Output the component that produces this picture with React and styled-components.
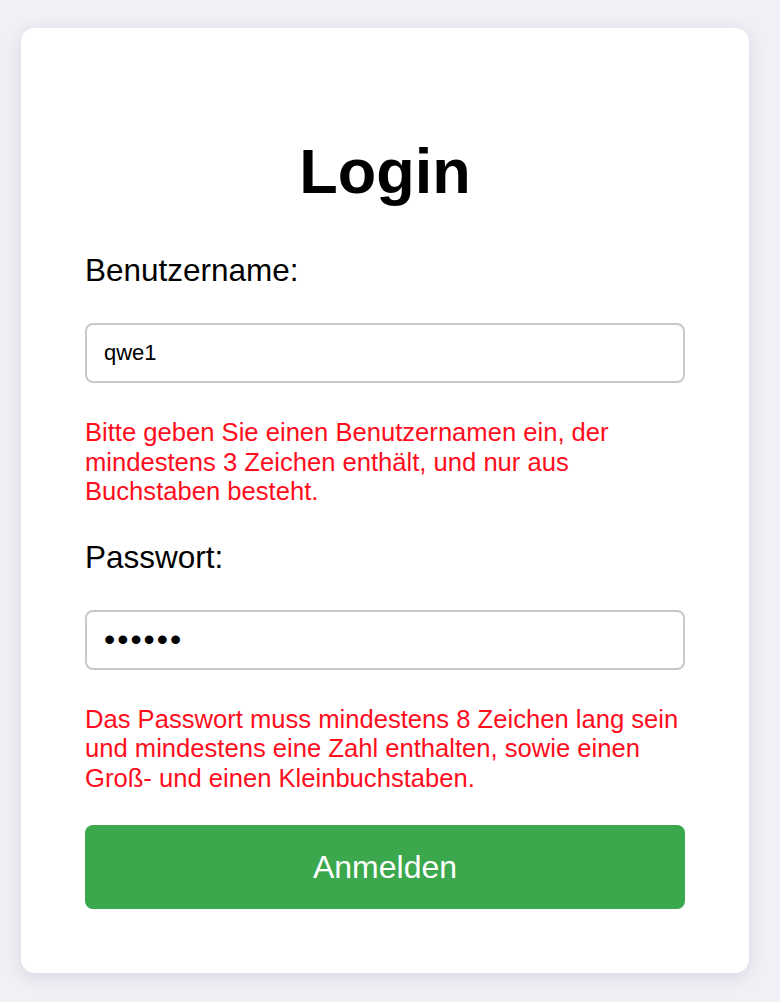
import React, { useState } from "react";
import styled, { createGlobalStyle } from "styled-components";

const GlobalStyle = createGlobalStyle`
  html, body {
    margin: 0;
    padding: 0;
    background: #f0f0f6;
    font-family: "Liberation Sans", Arial, Helvetica, sans-serif;
  }
  * {
    box-sizing: border-box;
  }
`;

export default function App() {
  const [usuario, setUsuario] = useState("qwe1");
  const [clave, setClave] = useState("123456");

  return (
    <>
      <GlobalStyle />
      <Pagina>
        <Tarjeta>
          <Titulo>Login</Titulo>
          <form onSubmit={(e) => e.preventDefault()}>
            <Grupo>
              <Etiqueta htmlFor="usuario">Benutzername:</Etiqueta>
              <Campo
                id="usuario"
                type="text"
                value={usuario}
                onChange={(e) => setUsuario(e.target.value)}
              />
              <Error>
                Bitte geben Sie einen Benutzernamen ein, der mindestens 3
                Zeichen enthält, und nur aus Buchstaben besteht.
              </Error>
            </Grupo>
            <Grupo>
              <Etiqueta htmlFor="clave">Passwort:</Etiqueta>
              <Campo
                id="clave"
                type="password"
                $oculto
                value={clave}
                onChange={(e) => setClave(e.target.value)}
              />
              <Error>
                Das Passwort muss mindestens 8 Zeichen lang sein und
                mindestens eine Zahl enthalten, sowie einen Groß- und einen
                Kleinbuchstaben.
              </Error>
            </Grupo>
            <Boton type="submit">Anmelden</Boton>
          </form>
        </Tarjeta>
      </Pagina>
    </>
  );
}

const Pagina = styled.div`
  padding: 28px 31px 30px 21px;
`;

const Tarjeta = styled.div`
  width: 728px;
  background: #fff;
  border-radius: 14px;
  box-shadow: 0 4px 18px rgba(40, 40, 70, 0.12);
  padding: 64px;
`;

const Titulo = styled.h1`
  margin: 43px 0 45px;
  font-size: 63px;
  line-height: 72px;
  font-weight: 700;
  text-align: center;
  color: #000;
`;

const Grupo = styled.div`
  display: flex;
  flex-direction: column;
  margin-bottom: 32px;
`;

const Etiqueta = styled.label`
  font-size: 31.5px;
  line-height: 36px;
  color: #000;
  margin-bottom: 35px;
`;

const Campo = styled.input`
  width: 100%;
  height: 60px;
  border: 2px solid #c8c8c8;
  border-radius: 8px;
  padding: 0 17px;
  font-family: "Liberation Sans", Arial, sans-serif;
  font-size: ${(p) => (p.$oculto ? "32px" : "22px")};
  letter-spacing: ${(p) => (p.$oculto ? "2px" : "0")};
  color: #000;
  background: #fff;
  outline: none;
`;

const Error = styled.p`
  margin: 35px 0 0;
  font-size: 25.6px;
  line-height: 29.5px;
  color: #ff0d1d;
`;

const Boton = styled.button`
  display: block;
  width: 100%;
  height: 84px;
  border: none;
  border-radius: 8px;
  background: #3ca84d;
  color: #fff;
  font-family: "Liberation Sans", Arial, sans-serif;
  font-size: 32px;
  cursor: pointer;
`;
